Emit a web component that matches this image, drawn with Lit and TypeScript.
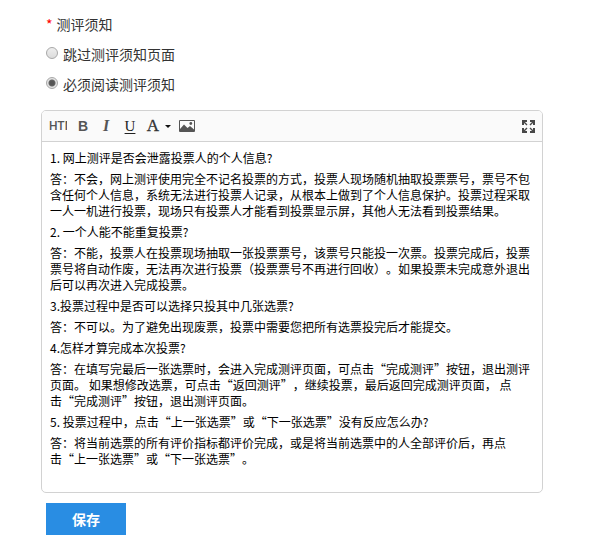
import { LitElement, html, css, svg } from "lit";
import { customElement, state } from "lit/decorators.js";

const NOTES: string[] = [
  "1. 网上测评是否会泄露投票人的个人信息?",
  "答：不会，网上测评使用完全不记名投票的方式，投票人现场随机抽取投票票号，票号不包含任何个人信息，系统无法进行投票人记录，从根本上做到了个人信息保护。投票过程采取一人一机进行投票，现场只有投票人才能看到投票显示屏，其他人无法看到投票结果。",
  "2. 一个人能不能重复投票?",
  "答：不能，投票人在投票现场抽取一张投票票号，该票号只能投一次票。投票完成后，投票票号将自动作废，无法再次进行投票（投票票号不再进行回收）。如果投票未完成意外退出后可以再次进入完成投票。",
  "3.投票过程中是否可以选择只投其中几张选票?",
  "答：不可以。为了避免出现废票，投票中需要您把所有选票投完后才能提交。",
  "4.怎样才算完成本次投票?",
  "答：在填写完最后一张选票时，会进入完成测评页面，可点击“完成测评”按钮，退出测评页面。 如果想修改选票，可点击“返回测评”，继续投票，最后返回完成测评页面， 点击“完成测评”按钮，退出测评页面。",
  "5. 投票过程中，点击“上一张选票”或“下一张选票”没有反应怎么办?",
  "答：将当前选票的所有评价指标都评价完成，或是将当前选票中的人全部评价后，再点击“上一张选票”或“下一张选票”。",
];

const OPTIONS = [
  { value: "skip", label: "跳过测评须知页面" },
  { value: "must", label: "必须阅读测评须知" },
];

const imageIcon = svg`<svg class="icon" width="16" height="12" viewBox="0 0 16 12">
  <path fill="#555" fill-rule="evenodd" d="M1 0H15a1 1 0 0 1 1 1V11a1 1 0 0 1-1 1H1a1 1 0 0 1-1-1V1a1 1 0 0 1 1-1ZM1 1V11H15V1Z"/>
  <path fill="#555" d="M1 11V9L5 4.500L8.500 8L11 6L15 9.500V11Z"/>
  <circle cx="11.800" cy="3.500" r="1.400" fill="#555"/>
</svg>`;

const expandIcon = svg`<svg class="icon" width="13" height="13" viewBox="0 0 13 13">
  <g fill="none" stroke="#484848" stroke-width="2">
    <path d="M1 5V1H5M8 1H12V5M12 8V12H8M5 12H1V8"/>
    <path stroke-width="1.400" d="M1 1L5 5M12 1L8 5M12 12L8 8M1 12L5 8"/>
  </g>
</svg>`;

@customElement("note-editor")
export class NoteEditor extends LitElement {
  static styles = css`
    :host {
      display: block;
      border: 1px solid #d2d2d2;
      border-radius: 5px;
      background: #fff;
      overflow: hidden;
    }
    .toolbar {
      display: flex;
      align-items: center;
      height: 30px;
      padding: 0 7px;
      border-bottom: 1px solid #d2d2d2;
      background: #fafafa;
    }
    button {
      display: flex;
      align-items: center;
      justify-content: center;
      flex: none;
      width: 24px;
      height: 24px;
      padding: 0;
      border: 0;
      background: none;
      color: #555;
      font: bold 14px/24px "Liberation Sans", Arial, sans-serif;
    }
    .source {
      justify-content: flex-start;
      width: 18px;
      margin-right: 4px;
      overflow: hidden;
      font-family: Roboto, sans-serif;
      font-size: 12px;
      font-weight: 500;
    }
    .italic,
    .under,
    .color {
      font-family: "Liberation Serif", "Times New Roman", serif;
    }
    .italic {
      width: 22px;
      font-style: italic;
      font-size: 16px;
    }
    .under {
      width: 26px;
      color: #222;
      font-size: 15px;
      font-weight: 400;
      text-decoration: underline;
      text-underline-offset: 2px;
    }
    .color {
      width: 32px;
      gap: 6px;
      color: #333;
      font-size: 17px;
      font-weight: 400;
      -webkit-text-stroke: 0.3px #333;
    }
    .caret {
      border: 3px solid transparent;
      border-top-color: #111;
      border-bottom: 0;
    }
    .full {
      width: 14px;
      margin-left: auto;
    }
    .icon {
      display: block;
      flex: none;
    }
    .body {
      box-sizing: border-box;
      min-height: 350px;
      padding: 8px;
      outline: none;
      color: #000;
      font-size: 12px;
      line-height: 16px;
      text-spacing-trim: space-all;
    }
    p {
      margin: 0 0 5px;
    }
    .keep {
      white-space: nowrap;
    }
  `;

  // Keeps the character before an opening quote on the quote's line.
  private paragraph(text: string) {
    return text
      .split(/(击“.)/)
      .map((part, i) => (i % 2 ? html`<span class="keep">${part}</span>` : part));
  }

  render() {
    return html`
      <div class="toolbar" role="toolbar" aria-label="编辑工具">
        <button class="source" type="button">HTML</button>
        <button class="bold" type="button">B</button>
        <button class="italic" type="button">I</button>
        <button class="under" type="button">U</button>
        <button class="color" type="button">A<span class="caret"></span></button>
        <button class="image" type="button" aria-label="图片">${imageIcon}</button>
        <button class="full" type="button" aria-label="全屏">${expandIcon}</button>
      </div>
      <div class="body" contenteditable="true" spellcheck="false" role="textbox" aria-multiline="true" aria-label="测评须知">${NOTES.map((n) => html`<p>${this.paragraph(n)}</p>`)}</div>
    `;
  }
}

@customElement("app-root")
export class AppRoot extends LitElement {
  static styles = css`
    :host {
      display: block;
      background: #fff;
      color: #333;
      font-family: "Noto Sans CJK SC", sans-serif;
      font-size: 14px;
    }
    form {
      padding: 9px 57px 20px 41px;
    }
    fieldset {
      min-width: 0;
      margin: 0 0 11px;
      padding: 0 0 0 5px;
      border: 0;
    }
    legend {
      padding: 0;
      line-height: 30px;
    }
    .star {
      margin-right: 4px;
      color: #f00;
    }
    .option {
      display: flex;
      align-items: center;
      gap: 5px;
      height: 30px;
    }
    .option input {
      appearance: none;
      box-sizing: border-box;
      width: 12px;
      height: 12px;
      margin: 0 0 2px;
      border: 1px solid #a8a8a8;
      border-radius: 50%;
      background: linear-gradient(#eee, #dcdcdc);
    }
    .option input:checked {
      background: radial-gradient(circle, #555 0 2px, #666 3px, #e4e4e4 4px);
    }
    .save {
      display: block;
      width: 80px;
      height: 32px;
      margin: 10px 0 0 5px;
      padding: 0;
      border: 0;
      background: #298de3;
      color: #fff;
      font: bold 14px/32px "Noto Sans CJK SC", sans-serif;
    }
  `;

  @state() private mode = "must";

  render() {
    return html`
      <form @submit=${(e: Event) => e.preventDefault()}>
        <fieldset>
          <legend><span class="star">*</span>测评须知</legend>
          ${OPTIONS.map(
            (o) => html`<label class="option">
              <input type="radio" name="mode" .value=${o.value} .checked=${this.mode === o.value}
                @change=${() => (this.mode = o.value)} />
              <span>${o.label}</span>
            </label>`,
          )}
        </fieldset>
        <note-editor></note-editor>
        <button class="save" type="submit">保存</button>
      </form>
    `;
  }
}
